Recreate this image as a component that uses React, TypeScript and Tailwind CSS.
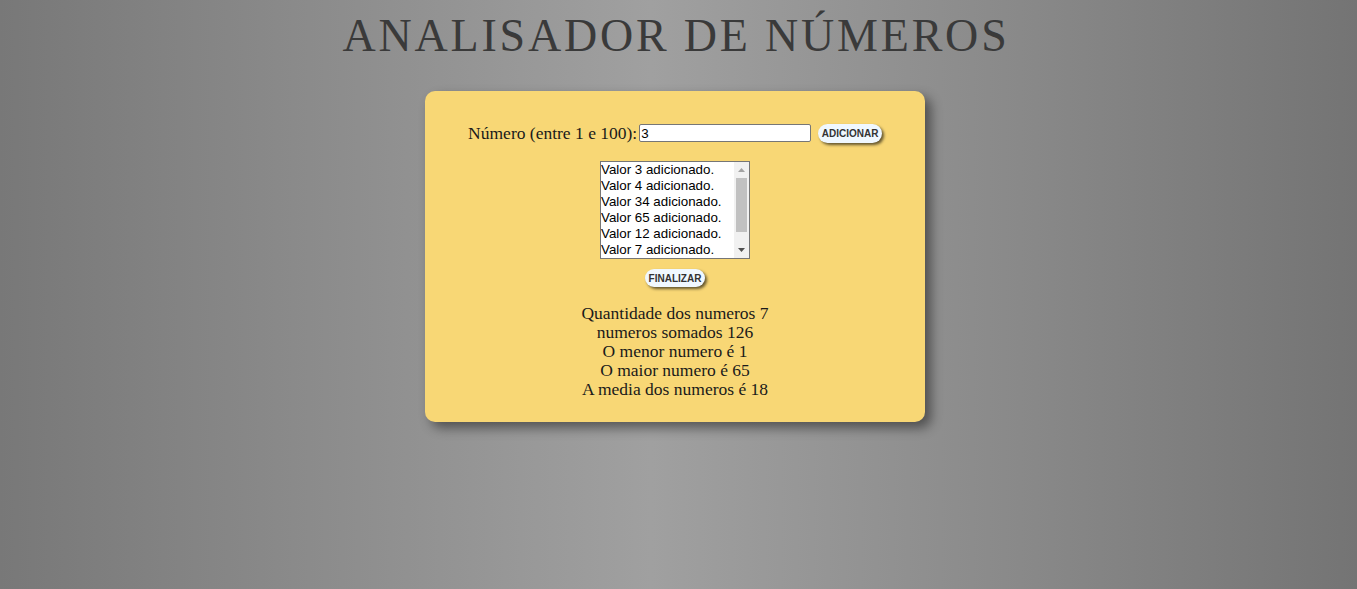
import React from "react";

const items = [3, 4, 34, 65, 12, 7, 5];

function ListBox() {
  return (
    <div className="mt-[18px] w-[150px] h-[98px] bg-white border border-[#767676] flex font-['Liberation_Sans',sans-serif] text-[13.33px] text-black">
      <div role="listbox" className="flex-1 overflow-hidden">
        {items.map((v) => (
          <div key={v} role="option" className="h-[16px] leading-[16px] pl-[0px] whitespace-nowrap">
            Valor {v} adicionado.
          </div>
        ))}
      </div>
      <div className="w-[15px] bg-[#f1f1f1] flex flex-col">
        <div className="h-[16px] flex items-center justify-center">
          <svg width="7" height="4" viewBox="0 0 7 4">
            <path d="M3.5 0 L7 4 L0 4 Z" fill="#a3a3a3" />
          </svg>
        </div>
        <div className="h-[54px] mx-[2px] bg-[#c1c1c1]" />
        <div className="flex-1" />
        <div className="h-[16px] flex items-center justify-center">
          <svg width="7" height="4" viewBox="0 0 7 4">
            <path d="M0 0 L7 0 L3.5 4 Z" fill="#505050" />
          </svg>
        </div>
      </div>
    </div>
  );
}

export default function App() {
  return (
    <div className="min-h-screen w-full bg-[linear-gradient(to_right,#787878_0%,#a0a0a0_48%,#747474_100%)] font-['Liberation_Serif',serif] pt-[13px]">
      <h1 className="text-center text-[46px] leading-[46px] tracking-[2.8px] text-[#3a3a3a] font-normal pl-[2px] pr-[7px]">
        ANALISADOR DE NÚMEROS
      </h1>
      <div className="flex justify-center pr-[7px] mt-[32px]">
        <div className="w-[500px] rounded-[10px] bg-[#f8d775] shadow-[6px_6px_12px_rgba(0,0,0,0.45)] pt-[32px] pb-[23px] flex flex-col items-center text-[#1a1a1a]">
          <div className="flex items-center h-[20px]">
            <label className="text-[17.5px] leading-[20px] mr-[2px]">Número (entre 1 e 100):</label>
            <input
              type="number"
              defaultValue="3"
              className="w-[172px] h-[18px] bg-white border border-[#767676] rounded-[2px] px-[1px] text-[13.33px] leading-[16px] text-black font-['Liberation_Sans',sans-serif] outline-none [appearance:textfield] [&::-webkit-inner-spin-button]:appearance-none [&::-webkit-outer-spin-button]:appearance-none"
            />
            <button className="ml-[7px] h-[19px] px-[3.5px] rounded-full bg-[#f0f8ff] text-[10px] font-bold text-[#333] font-['Liberation_Sans',sans-serif] shadow-[2px_2px_3px_rgba(0,0,0,0.6)]">
              ADICIONAR
            </button>
          </div>
          <ListBox />
          <button className="mt-[10px] h-[18px] px-[3.5px] rounded-full bg-[#f0f8ff] text-[10px] font-bold text-[#333] font-['Liberation_Sans',sans-serif] shadow-[2px_2px_3px_rgba(0,0,0,0.6)]">
            FINALIZAR
          </button>
          <div className="mt-[17px] text-center text-[17.5px] leading-[19px]">
            <p>Quantidade dos numeros 7</p>
            <p>numeros somados 126</p>
            <p>O menor numero é 1</p>
            <p>O maior numero é 65</p>
            <p>A media dos numeros é 18</p>
          </div>
        </div>
      </div>
    </div>
  );
}
